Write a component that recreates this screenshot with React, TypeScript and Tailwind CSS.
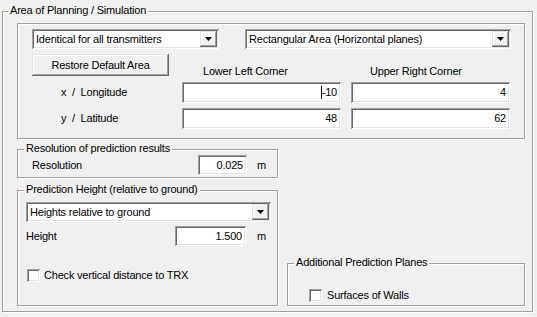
import React from "react";

const SUNKEN =
  "shadow-[inset_1px_1px_0_#a0a0a0,inset_-1px_-1px_0_#ffffff,inset_2px_2px_0_#696969,inset_-2px_-2px_0_#e3e3e3]";
const RAISED =
  "shadow-[inset_-1px_-1px_0_#696969,inset_1px_1px_0_#e3e3e3,inset_-2px_-2px_0_#a0a0a0,inset_2px_2px_0_#ffffff]";
const ETCHED =
  "border border-[#a0a0a0] shadow-[inset_1px_1px_0_#ffffff,1px_1px_0_#ffffff]";

function Group({
  title,
  className,
  titleClass = "left-[6px]",
  children,
}: {
  title?: string;
  className?: string;
  titleClass?: string;
  children?: React.ReactNode;
}) {
  return (
    <div className={`relative ${ETCHED} ${className ?? ""}`}>
      {title && (
        <span
          className={`absolute -top-[8px] ${titleClass} px-[2px] bg-[#f0f0f0] leading-[13px] whitespace-nowrap`}
        >
          {title}
        </span>
      )}
      {children}
    </div>
  );
}

function Combo({ w, text }: { w: string; text: string }) {
  return (
    <div className={`${w} h-[20px] bg-white ${SUNKEN} flex items-center pl-[4px]`}>
      <span className="flex-1 whitespace-nowrap overflow-hidden">{text}</span>
      <div
        className={`w-[17px] h-[16px] mr-[2px] bg-[#f0f0f0] ${RAISED} flex items-center justify-center`}
      >
        <svg width="7" height="4" viewBox="0 0 7 4">
          <polygon points="0,0 7,0 3.5,4" fill="#000" />
        </svg>
      </div>
    </div>
  );
}

function Input({
  w,
  h = "h-[21px]",
  children,
  className = "",
}: {
  w: string;
  h?: string;
  children?: React.ReactNode;
  className?: string;
}) {
  return (
    <div
      className={`${w} ${h} bg-white ${SUNKEN} flex items-center justify-end pr-[4px] whitespace-nowrap ${className}`}
    >
      {children}
    </div>
  );
}

function Check() {
  return <div className={`w-[13px] h-[13px] bg-white ${SUNKEN} shrink-0`} />;
}

export default function App() {
  return (
    <div className="w-[537px] h-[317px] bg-[#f0f0f0] pl-[2px] pt-[11px] text-[11px] leading-[13px] text-black font-['Liberation_Sans',Arial,sans-serif] tracking-[-0.2px] overflow-hidden">
      <Group
        title="Area of Planning / Simulation"
        titleClass="left-[5px]"
        className="w-[531px] h-[301px] pt-[11px] pl-[14px]"
      >
        <div className={`${ETCHED} w-[508px] h-[116px] pt-[5px] pl-[14px]`}>
          <div className="flex gap-[26px]">
            <Combo w="w-[187px]" text="Identical for all transmitters" />
            <Combo w="w-[266px]" text="Rectangular Area (Horizontal planes)" />
          </div>
          <div className="flex mt-[5px]">
            <div
              className={`w-[137px] h-[22px] bg-[#f0f0f0] ${RAISED} flex items-center justify-center whitespace-nowrap`}
            >
              Restore Default Area
            </div>
            <div className="ml-[13px] w-[159px] pl-[21px] mt-[11px] whitespace-nowrap">
              Lower Left Corner
            </div>
            <div className="ml-[10px] w-[159px] pl-[19px] mt-[11px] whitespace-nowrap">
              Upper Right Corner
            </div>
          </div>
          <div className="flex items-center mt-[4px]">
            <div className="w-[150px] pl-[29px] whitespace-pre">x  /  Longitude</div>
            <Input w="w-[159px]">
              <span className="inline-block w-px h-[13px] bg-black" />
              -10
            </Input>
            <Input w="w-[159px]" className="ml-[10px]">
              4
            </Input>
          </div>
          <div className="flex items-center mt-[5px]">
            <div className="w-[150px] pl-[29px] whitespace-pre">y  /  Latitude</div>
            <Input w="w-[159px]">48</Input>
            <Input w="w-[159px]" className="ml-[10px]">
              62
            </Input>
          </div>
        </div>

        <div className="flex items-end gap-[9px] mt-[10px]">
          <div className="w-[261px]">
            <Group title="Resolution of prediction results" className="h-[29px] pt-[5px] pl-[14px]">
              <div className="flex items-center">
                <div className="w-[166px]">Resolution</div>
                <Input w="w-[49px]" h="h-[20px]">
                  0.025
                </Input>
                <span className="ml-[10px]">m</span>
              </div>
            </Group>
            <Group
              title="Prediction Height (relative to ground)"
              className="mt-[12px] h-[116px] pt-[11px] pl-[8px]"
            >
              <Combo w="w-[245px]" text="Heights relative to ground" />
              <div className="flex items-center mt-[4px]">
                <div className="w-[149px]">Height</div>
                <Input w="w-[71px]" h="h-[20px]">
                  1.500
                </Input>
                <span className="ml-[11px]">m</span>
              </div>
              <div className="flex items-center mt-[23px] ml-[1px]">
                <Check />
                <span className="ml-[4px] whitespace-nowrap">Check vertical distance to TRX</span>
              </div>
            </Group>
          </div>
          <Group
            title="Additional Prediction Planes"
            className="w-[238px] h-[43px] pt-[25px] pl-[21px]"
          >
            <div className="flex items-center">
              <Check />
              <span className="ml-[5px] whitespace-nowrap">Surfaces of Walls</span>
            </div>
          </Group>
        </div>
      </Group>
    </div>
  );
}
